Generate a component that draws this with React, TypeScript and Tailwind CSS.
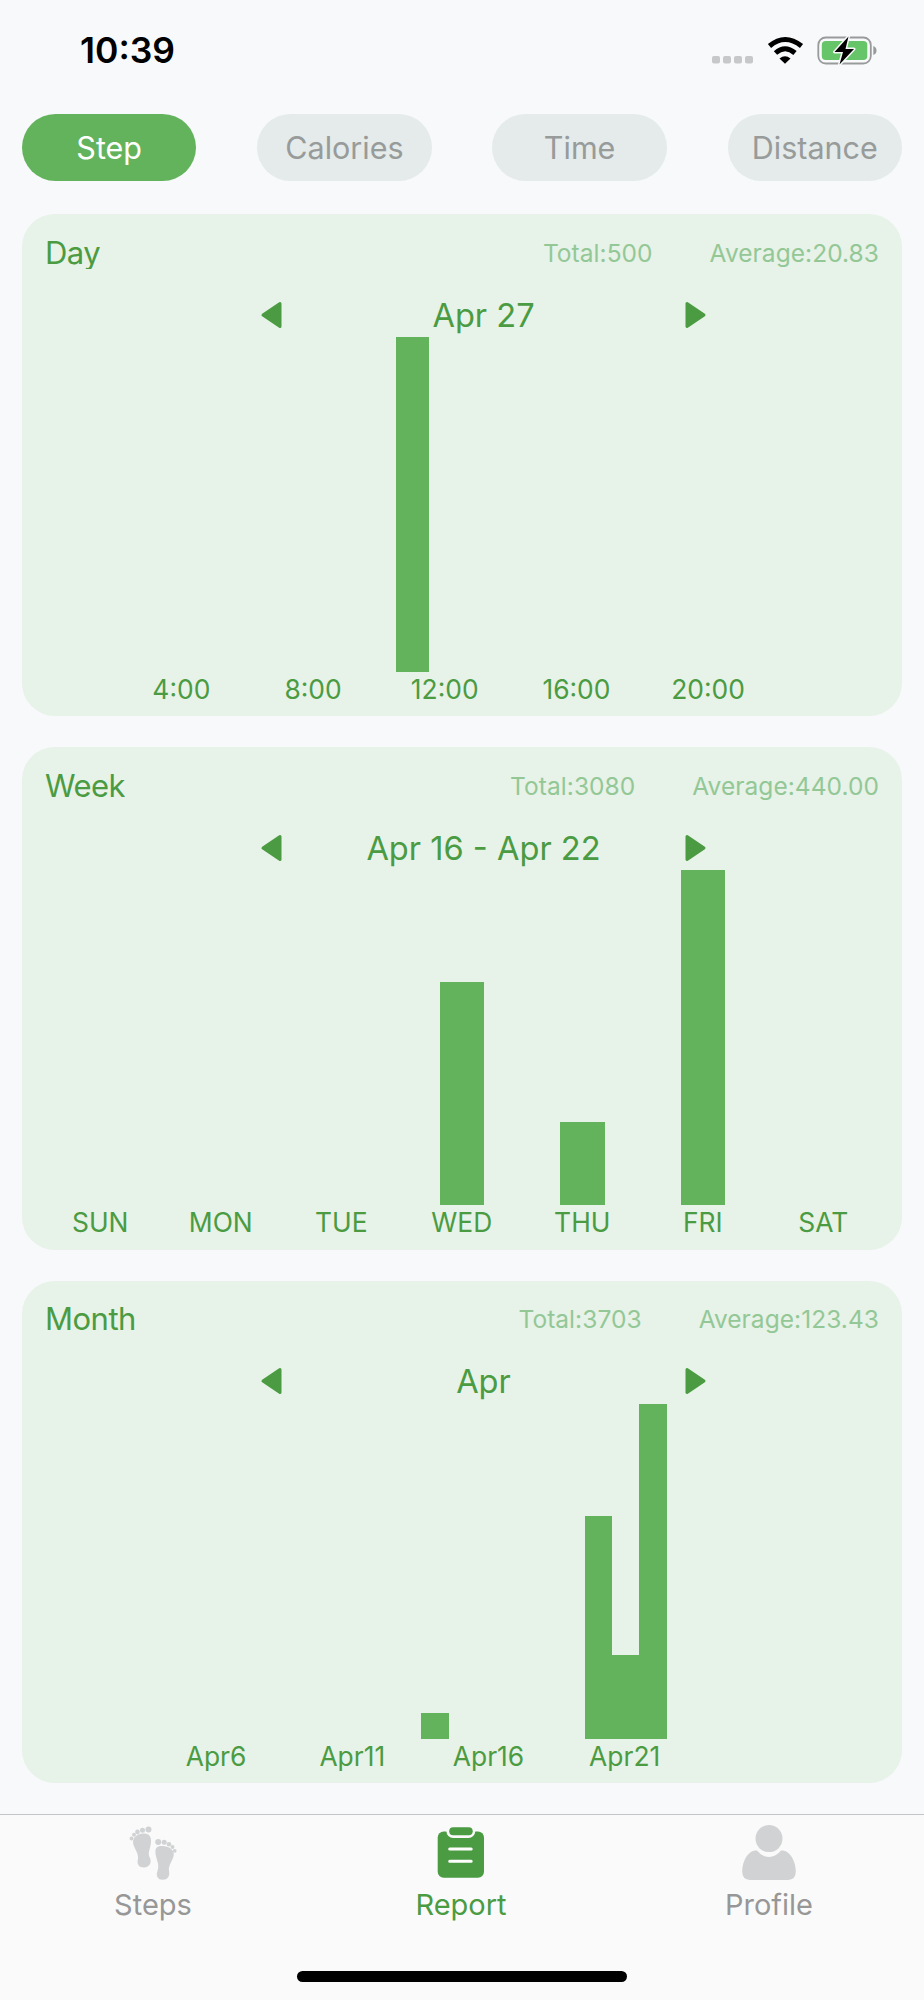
import React from "react";

const GREEN = "#4b9b42";

type Bar = { left: number; width: number; height: number };

function Triangle({ flip = false }: { flip?: boolean }) {
  return (
    <svg width="23" height="30" viewBox="0 0 23 30" className={flip ? "rotate-180" : ""}>
      <path d="M20 3.5V26.5L3 15Z" fill={GREEN} stroke={GREEN} strokeWidth="3" strokeLinejoin="round" />
    </svg>
  );
}

function Card(props: {
  title: string;
  total: string;
  average: string;
  range: string;
  bars: Bar[];
  labels: string[];
  labelWidth: number;
  labelPad: string;
}) {
  return (
    <section className="flex h-[502.4px] w-[880px] shrink-0 flex-col rounded-[33px] bg-[#e7f2e8]">
      <header className="flex h-[76px] items-center justify-between px-[23px]">
        <h2 className="h-[33px] overflow-hidden text-[31px] leading-[33px] tracking-[-0.5px] text-[#4b9b42]">
          {props.title}
        </h2>
        <div className="flex gap-[57px] pt-px text-[24.5px] leading-[30px] tracking-[0.05px] text-[#93c896]">
          <span>{props.total}</span>
          <span>{props.average}</span>
        </div>
      </header>
      <div className="flex h-[47px] items-center justify-between pt-[2px] pr-[195px] pl-[238px]">
        <Triangle />
        <span className="text-[32.6px] leading-[40px] text-[#4b9b42]">{props.range}</span>
        <Triangle flip />
      </div>
      <div className="relative h-[335px]">
        {props.bars.map((b) => (
          <div
            key={b.left}
            className="absolute bottom-0 bg-[#63b35c]"
            style={{ left: b.left, width: b.width, height: b.height }}
          />
        ))}
      </div>
      <div className={`flex ${props.labelPad} text-[26.4px] leading-[34px] text-[#4b9b42]`}>
        {props.labels.map((text) => (
          <span key={text} className="shrink-0 text-center" style={{ width: props.labelWidth }}>
            {text}
          </span>
        ))}
      </div>
    </section>
  );
}

function Pill({ text, active = false }: { text: string; active?: boolean }) {
  return (
    <button
      className={`flex h-[67px] w-[174.4px] items-center justify-center rounded-full text-[30.5px] ${
        active ? "bg-[#63b35c] text-white" : "bg-[#e5eaea] text-[#979b9a]"
      }`}
    >
      {text}
    </button>
  );
}

function Footprints() {
  return (
    <svg width="54" height="60" viewBox="-1 0 54 60" fill="#d0d2d4">
      <path d="M16 9.5C22 9.5 24.5 12 24 18C23.600 25 20 29 23 34C25 39 22 43.500 17 43.500C12 43.500 9.500 40 11 35C12 29 6 23 6 18C6 13 11 9.500 16 9.500Z" />
      <circle cx="21.500" cy="5.500" r="3" />
      <circle cx="15.500" cy="6.300" r="2.500" />
      <circle cx="10.500" cy="7.900" r="2.300" />
      <circle cx="7" cy="10.800" r="2" />
      <circle cx="4.500" cy="14.500" r="1.900" />
      <path d="M36 22C30 21.500 28 24 28.500 29C29 36 33 40 30.500 47C28.500 52 31 55.800 35.500 55.800C41 55.800 43 52 42 47C41 41 46.500 36 46.800 30.500C46.800 25 41 22.300 36 22Z" />
      <circle cx="31.200" cy="18" r="3" />
      <circle cx="37.200" cy="18.300" r="2.500" />
      <circle cx="42" cy="20.200" r="2.300" />
      <circle cx="45.500" cy="23" r="2" />
      <circle cx="47.700" cy="26.800" r="1.900" />
    </svg>
  );
}

function Clipboard() {
  return (
    <svg width="54" height="60" viewBox="0.3 -0.2 54 60">
      <rect x="4" y="7.200" width="46.300" height="46.300" rx="6" fill={GREEN} />
      <rect x="12.700" y="0" width="28.800" height="13.800" rx="6.800" fill="#fafafa" />
      <rect x="15.500" y="3" width="23.500" height="8" rx="4" fill={GREEN} />
      <path d="M16 24.800H37.500M16 37.100H37.500" stroke="white" strokeWidth="3" strokeLinecap="round" />
    </svg>
  );
}

function Person() {
  return (
    <svg width="54" height="60" viewBox="0 -0.6 54 60" fill="#d0d2d4">
      <circle cx="27" cy="14" r="13.500" />
      <path d="M13 26H15Q20 32.300 27 32.300T39 26H41C49 27 53.800 38 53.800 47Q53.800 55.300 46 55.300H8Q0.200 55.300 0.200 47C0.200 38 5 27 13 26Z" />
    </svg>
  );
}

function Tab({ text, color, children }: { text: string; color: string; children: React.ReactNode }) {
  return (
    <div className={`flex flex-1 flex-col items-center pt-[9px] pr-[2px] ${color}`}>
      {children}
      <span className="mt-[3px] text-[29px] leading-[36px]">{text}</span>
    </div>
  );
}

export default function App() {
  return (
    <div className="flex h-[2000px] w-[924px] flex-col overflow-hidden bg-[#f7f9fb] font-['Inter',sans-serif]">
      <div className="flex h-[100px] shrink-0 items-center justify-between pr-[47px] pl-[80px]">
        <span className="pt-px text-[35.5px] font-semibold text-black">10:39</span>
        <svg width="166" height="32" viewBox="0 0 166 32">
          <g fill="#c7c8c9">
            <rect x="1" y="22" width="8" height="7.500" rx="2" />
            <rect x="12" y="22" width="8" height="7.500" rx="2" />
            <rect x="23" y="22" width="8" height="7.500" rx="2" />
            <rect x="34" y="22" width="8" height="7.500" rx="2" />
          </g>
          <g fill="none" stroke="black" strokeWidth="5">
            <path d="M58.500 12Q74 -1 90.500 12" />
            <path d="M64.500 19Q74 10.500 84 19" />
          </g>
          <path d="M68.500 24.500Q74 20 79.500 24.500L74 29.800Z" />
          <rect x="107.300" y="3.500" width="52.500" height="26" rx="7.500" fill="none" stroke="#999b9b" strokeWidth="1.800" />
          <rect x="110.800" y="7" width="45.500" height="19" rx="4" fill="#66c568" />
          <path d="M162.300 12Q165.500 13 165.500 16.500T162.300 21Z" fill="#999b9b" />
          <path d="M137.500 2.500L123.500 18H132L128.500 30.500L143 15H134.500Z" fill="black" stroke="#f7f9fb" strokeWidth="3" paintOrder="stroke" strokeLinejoin="round" />
        </svg>
      </div>
      <nav className="mt-[14px] flex shrink-0 justify-between px-[22px]">
        <Pill text="Step" active />
        <Pill text="Calories" />
        <Pill text="Time" />
        <Pill text="Distance" />
      </nav>
      <main className="mt-[33px] flex h-[1600px] shrink-0 flex-col items-center gap-[31px]">
        <Card
          title="Day"
          total="Total:500"
          average="Average:20.83"
          range="Apr 27"
          bars={[{ left: 373.7, width: 33.6, height: 335 }]}
          labelPad="pl-[93.5px]"
          labelWidth={131.7}
          labels={["4:00", "8:00", "12:00", "16:00", "20:00"]}
        />
        <Card
          title="Week"
          total="Total:3080"
          average="Average:440.00"
          range="Apr 16 - Apr 22"
          bars={[
            { left: 417.6, width: 44.8, height: 223 },
            { left: 538, width: 44.8, height: 83 },
            { left: 658.6, width: 44.8, height: 335 },
          ]}
          labelPad="pl-[18px]"
          labelWidth={120.5}
          labels={["SUN", "MON", "TUE", "WED", "THU", "FRI", "SAT"]}
        />
        <Card
          title="Month"
          total="Total:3703"
          average="Average:123.43"
          range="Apr"
          bars={[
            { left: 399, width: 27.7, height: 25.6 },
            { left: 562.5, width: 27.5, height: 223 },
            { left: 589.5, width: 27.5, height: 83.4 },
            { left: 617, width: 27.6, height: 335 },
          ]}
          labelPad="pl-[126px]"
          labelWidth={136.2}
          labels={["Apr6", "Apr11", "Apr16", "Apr21"]}
        />
      </main>
      <footer className="flex h-[186px] shrink-0 flex-col border-t border-[#c4c5c7] bg-[#fafafa]">
        <div className="flex">
          <Tab text="Steps" color="text-[#979797]"><Footprints /></Tab>
          <Tab text="Report" color="text-[#4b9b42]"><Clipboard /></Tab>
          <Tab text="Profile" color="text-[#979797]"><Person /></Tab>
        </div>
        <div className="mx-auto mt-[48px] h-[11px] w-[330px] rounded-full bg-black" />
      </footer>
    </div>
  );
}
